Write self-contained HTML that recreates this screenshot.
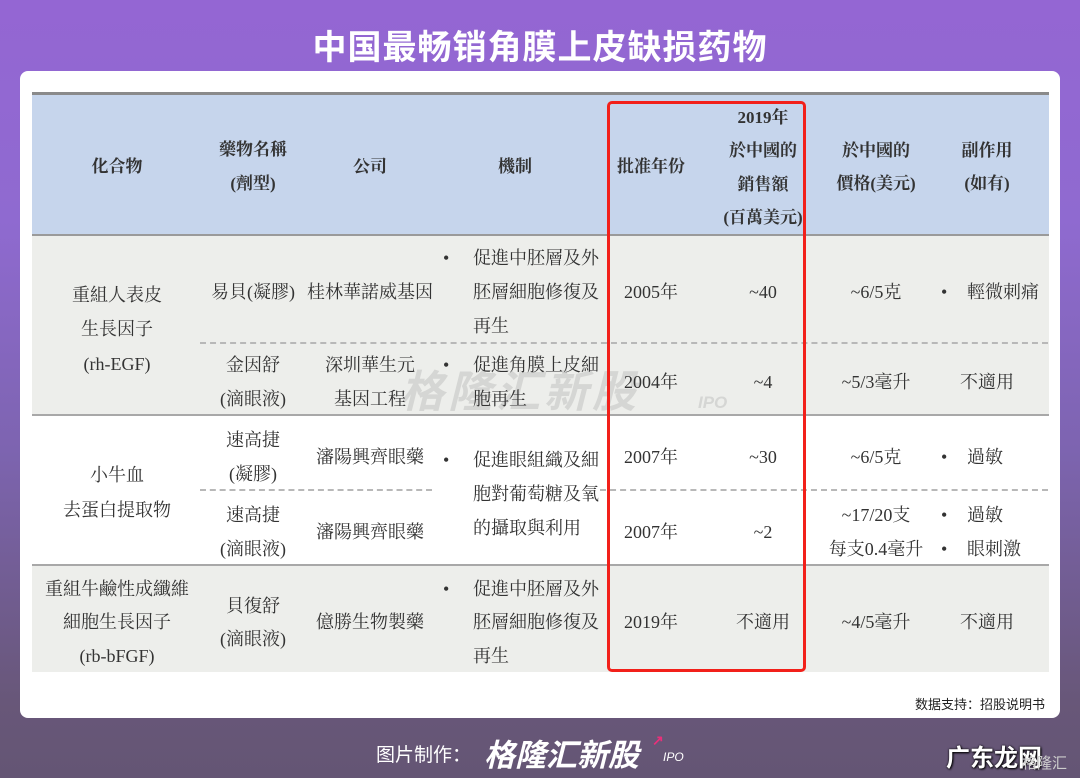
<!DOCTYPE html>
<html><head><meta charset="utf-8"><style>
*{margin:0;padding:0;box-sizing:border-box}
body{width:1080px;height:778px;overflow:hidden;position:relative;font-family:"Liberation Serif","Noto Serif CJK SC",serif;
background:linear-gradient(180deg,#9466d3 0px,#8f6ad0 220px,#7d64b0 450px,#685779 700px,#645574 778px);}
.title{position:absolute;left:0;width:1080px;top:20px;text-align:center;color:#fff;font:bold 34px "Liberation Sans","Noto Sans CJK SC",sans-serif;letter-spacing:1px}
.card{position:absolute;left:20px;top:71px;width:1040px;height:647px;background:#fff;border-radius:8px}
.a{position:absolute}
.c{position:absolute;transform:translateX(-50%);white-space:nowrap;text-align:center;line-height:34px;font-size:18px;color:#333;margin-top:-17px}
.l{position:absolute;white-space:nowrap;line-height:34px;font-size:18px;color:#333;margin-top:-17px}
.h{font-weight:bold;font-size:17px;color:#333}
.dash{position:absolute;height:0;border-top:2px dashed #b8b8b8}
.ln{position:absolute;left:32px;width:1017px;height:2px;background:#a8a8a8}
</style></head><body>
<div class="title">中国最畅销角膜上皮缺损药物</div>
<div class="card"></div>
<div class="a" style="left:32px;top:92px;width:1017px;height:3px;background:#8a8a8a"></div>
<div class="a" style="left:32px;top:95px;width:1017px;height:139px;background:#c6d5ec"></div>
<div class="a" style="left:32px;top:234px;width:1017px;height:2px;background:#9a9a9a"></div>
<div class="a" style="left:32px;top:236px;width:1017px;height:179px;background:#edeeeb"></div>
<div class="ln" style="top:414px"></div>
<div class="ln" style="top:564px"></div>
<div class="a" style="left:32px;top:566px;width:1017px;height:106px;background:#edeeeb"></div>
<div class="dash" style="left:200px;width:848px;top:342px"></div>
<div class="dash" style="left:200px;width:232px;top:489px"></div>
<div class="dash" style="left:600px;width:448px;top:489px"></div>
<!-- watermark -->
<div class="a" style="left:400px;top:356px;font:italic bold 44px 'Liberation Sans','Noto Sans CJK SC',sans-serif;color:rgba(160,160,160,0.3);letter-spacing:4px">格隆汇新股</div>
<div class="a" style="left:698px;top:393px;font:italic bold 17px 'Liberation Sans',sans-serif;color:rgba(160,160,160,0.3)">IPO</div>
<!-- header -->
<div class="c h" style="left:117px;top:167px">化合物</div>
<div class="c h" style="left:253px;top:150px">藥物名稱</div>
<div class="c h" style="left:253px;top:184px">(劑型)</div>
<div class="c h" style="left:370px;top:167px">公司</div>
<div class="c h" style="left:515px;top:167px">機制</div>
<div class="c h" style="left:651px;top:167px">批准年份</div>
<div class="c h" style="left:763px;top:118px">2019年</div>
<div class="c h" style="left:763px;top:151px">於中國的</div>
<div class="c h" style="left:763px;top:185px">銷售額</div>
<div class="c h" style="left:763px;top:218px">(百萬美元)</div>
<div class="c h" style="left:876px;top:151px">於中國的</div>
<div class="c h" style="left:876px;top:184px">價格(美元)</div>
<div class="c h" style="left:987px;top:151px">副作用</div>
<div class="c h" style="left:987px;top:184px">(如有)</div>
<!-- group1 -->
<div class="c" style="left:117px;top:295px">重組人表皮</div>
<div class="c" style="left:117px;top:329px">生長因子</div>
<div class="c" style="left:117px;top:364px">(rh-EGF)</div>
<div class="c" style="left:253px;top:292px">易貝(凝膠)</div>
<div class="c" style="left:370px;top:292px">桂林華諾威基因</div>
<div class="l" style="left:443px;top:258px">•</div>
<div class="l" style="left:473px;top:258px">促進中胚層及外</div>
<div class="l" style="left:473px;top:292px">胚層細胞修復及</div>
<div class="l" style="left:473px;top:326px">再生</div>
<div class="c" style="left:651px;top:292px">2005年</div>
<div class="c" style="left:763px;top:292px">~40</div>
<div class="c" style="left:876px;top:292px">~6/5克</div>
<div class="l" style="left:941px;top:292px">•</div>
<div class="l" style="left:967px;top:292px">輕微刺痛</div>
<div class="c" style="left:253px;top:365px">金因舒</div>
<div class="c" style="left:253px;top:399px">(滴眼液)</div>
<div class="c" style="left:370px;top:365px">深圳華生元</div>
<div class="c" style="left:370px;top:399px">基因工程</div>
<div class="l" style="left:443px;top:365px">•</div>
<div class="l" style="left:473px;top:365px">促進角膜上皮細</div>
<div class="l" style="left:473px;top:399px">胞再生</div>
<div class="c" style="left:651px;top:382px">2004年</div>
<div class="c" style="left:763px;top:382px">~4</div>
<div class="c" style="left:876px;top:382px">~5/3毫升</div>
<div class="c" style="left:987px;top:382px">不適用</div>
<!-- group2 -->
<div class="c" style="left:117px;top:475px">小牛血</div>
<div class="c" style="left:117px;top:510px">去蛋白提取物</div>
<div class="c" style="left:253px;top:440px">速高捷</div>
<div class="c" style="left:253px;top:474px">(凝膠)</div>
<div class="c" style="left:370px;top:457px">瀋陽興齊眼藥</div>
<div class="l" style="left:443px;top:460px">•</div>
<div class="l" style="left:473px;top:460px">促進眼組織及細</div>
<div class="l" style="left:473px;top:494px">胞對葡萄糖及氧</div>
<div class="l" style="left:473px;top:528px">的攝取與利用</div>
<div class="c" style="left:651px;top:457px">2007年</div>
<div class="c" style="left:763px;top:457px">~30</div>
<div class="c" style="left:876px;top:457px">~6/5克</div>
<div class="l" style="left:941px;top:457px">•</div>
<div class="l" style="left:967px;top:457px">過敏</div>
<div class="c" style="left:253px;top:515px">速高捷</div>
<div class="c" style="left:253px;top:549px">(滴眼液)</div>
<div class="c" style="left:370px;top:532px">瀋陽興齊眼藥</div>
<div class="c" style="left:651px;top:532px">2007年</div>
<div class="c" style="left:763px;top:532px">~2</div>
<div class="c" style="left:876px;top:515px">~17/20支</div>
<div class="c" style="left:876px;top:549px">每支0.4毫升</div>
<div class="l" style="left:941px;top:515px">•</div>
<div class="l" style="left:967px;top:515px">過敏</div>
<div class="l" style="left:941px;top:549px">•</div>
<div class="l" style="left:967px;top:549px">眼刺激</div>
<!-- group3 -->
<div class="c" style="left:117px;top:589px">重組牛鹼性成纖維</div>
<div class="c" style="left:117px;top:622px">細胞生長因子</div>
<div class="c" style="left:117px;top:656px">(rb-bFGF)</div>
<div class="c" style="left:253px;top:606px">貝復舒</div>
<div class="c" style="left:253px;top:639px">(滴眼液)</div>
<div class="c" style="left:370px;top:622px">億勝生物製藥</div>
<div class="l" style="left:443px;top:589px">•</div>
<div class="l" style="left:473px;top:589px">促進中胚層及外</div>
<div class="l" style="left:473px;top:622px">胚層細胞修復及</div>
<div class="l" style="left:473px;top:656px">再生</div>
<div class="c" style="left:651px;top:622px">2019年</div>
<div class="c" style="left:763px;top:622px">不適用</div>
<div class="c" style="left:876px;top:622px">~4/5毫升</div>
<div class="c" style="left:987px;top:622px">不適用</div>
<div class="a" style="left:607px;top:101px;width:199px;height:571px;border:3px solid #f2201a;border-radius:5px"></div>
<div class="a" style="right:35px;top:694px;font:13px 'Liberation Sans','Noto Sans CJK SC',sans-serif;color:#222">数据支持：招股说明书</div>
<!-- footer -->
<div class="a" style="left:376px;top:740px;font:19px 'Liberation Sans','Noto Sans CJK SC',sans-serif;color:#fff">图片制作：</div>
<div class="a" style="left:484px;top:730px;font:italic bold 31px 'Liberation Sans','Noto Sans CJK SC',sans-serif;color:#fff">格隆汇新股</div>
<div class="a" style="left:652px;top:732px;color:#e8307a;font:bold 14px sans-serif">↗</div>
<div class="a" style="left:663px;top:750px;font:italic 12px 'Liberation Sans',sans-serif;color:#fff">IPO</div>
<div class="a" style="left:946px;top:738px;font:bold 24px 'Liberation Sans','Noto Sans CJK SC',sans-serif;color:#fff;text-shadow:0 0 2px #000,1px 1px 2px #000">广东龙网</div>
<div class="a" style="left:1022px;top:752px;font:15px 'Liberation Sans','Noto Sans CJK SC',sans-serif;color:#ccc">格隆汇</div>
</body></html>
